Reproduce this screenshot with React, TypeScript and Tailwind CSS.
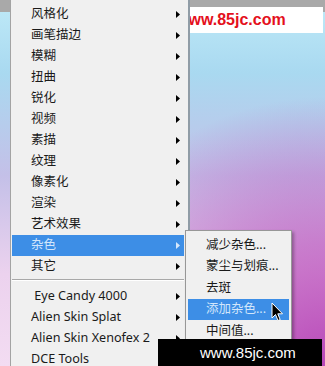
import React from "react";

const mainItems = [
  "风格化",
  "画笔描边",
  "模糊",
  "扭曲",
  "锐化",
  "视频",
  "素描",
  "纹理",
  "像素化",
  "渲染",
  "艺术效果",
  "杂色",
  "其它",
];

const pluginItems = ["\u00a0Eye Candy 4000", "Alien Skin Splat", "Alien Skin Xenofex 2", "DCE Tools"];

const subItems = ["减少杂色...", "蒙尘与划痕...", "去斑", "添加杂色...", "中间值..."];

function Arrow({ light }: { light?: boolean }) {
  return (
    <svg width="4" height="7" viewBox="0 0 4 7" className="shrink-0">
      <path d="M0 0 L4 3.5 L0 7 Z" fill={light ? "#d6e8fb" : "#000000"} />
    </svg>
  );
}

function MenuRow({ label, active, latin }: { label: string; active?: boolean; latin?: boolean }) {
  return (
    <div
      className={
        active
          ? "flex h-[21px] items-center justify-between pl-[19px] pr-[4px] bg-[#3d8ee6] text-[#d2e6fb]"
          : "flex h-[21px] items-center justify-between pl-[19px] pr-[4px] text-[#1a1a1a]"
      }
    >
      <span className={latin ? "whitespace-nowrap leading-none text-[12.6px]" : "whitespace-nowrap leading-none text-[12.5px]"}>
        {label}
      </span>
      <Arrow light={active} />
    </div>
  );
}

export default function App() {
  return (
    <div
      className="relative w-[325px] h-[366px] overflow-hidden bg-[radial-gradient(circle_at_100%_100%,#b848b8_0%,rgba(184,72,184,0.6)_25%,rgba(184,72,184,0)_55%),linear-gradient(to_bottom,#bfeaf8_0%,#a9d9f0_20%,#c4c0e8_48%,#ecd2ee_75%,#f3dcf2_100%)]"
      style={{ fontFamily: '"Noto Sans", "Noto Sans CJK SC", sans-serif' }}
    >
      {/* top gray strip */}
      <div className="h-[12px] w-full bg-[#a9a9a9]" />

      {/* top watermark */}
      <div className="absolute left-[135px] top-[7px] w-[188px] h-[26px] bg-white flex items-center pl-[41px]">
        <span
          className="text-[16px] font-bold text-[#e4101c] leading-none"
          style={{ fontFamily: '"Liberation Sans", Arial, sans-serif' }}
        >
          www.85jc.com
        </span>
      </div>

      {/* main menu */}
      <div className="absolute left-[10px] top-0 w-[180px] h-[366px] bg-[#f0f0f0] border-l border-[#a3a3a3] border-r-2 border-r-[#909ca6] pt-[3.5px] pl-[1px] pr-[4px]">
        {mainItems.map((m) => (
          <MenuRow key={m} label={m} active={m === "杂色"} />
        ))}
        <div className="mt-[2px] mb-[5.5px] h-[2px] border-t border-[#a8a8a8] bg-white" />
        {pluginItems.map((m) => (
          <MenuRow key={m} label={m} latin />
        ))}
      </div>

      {/* submenu */}
      <div className="absolute left-[185px] top-[230px] w-[107px] h-[110px] bg-[#f0f0f0] border border-[#979797] shadow-[2px_2px_3px_rgba(0,0,0,0.3)] pt-[3px] px-[2px] text-[12.5px]">
        {subItems.map((s) => (
          <div
            key={s}
            className={
              s === "添加杂色..."
                ? "flex h-[21.5px] items-center pl-[18px] bg-[#3d8ee6] text-[#d2e6fb]"
                : "flex h-[21.5px] items-center pl-[18px] text-[#1a1a1a]"
            }
          >
            <span className="whitespace-nowrap leading-none">{s}</span>
          </div>
        ))}
      </div>

      {/* cursor */}
      <svg className="absolute left-[271px] top-[302px]" width="13" height="21" viewBox="0 0 13 21">
        <path
          d="M1 1 L1 16 L4.5 12.5 L7 18.5 L9.2 17.6 L6.8 11.8 L11.5 11.8 Z"
          fill="#000"
          stroke="#fff"
          strokeWidth="1"
          strokeLinejoin="round"
        />
      </svg>

      {/* bottom watermark */}
      <div className="absolute left-[158px] top-[339px] w-[164px] h-[27px] bg-black flex items-center pl-[42px]">
        <span
          className="text-[15px] text-white leading-none"
          style={{ fontFamily: '"Liberation Sans", Arial, sans-serif' }}
        >
          www.85jc.com
        </span>
      </div>
    </div>
  );
}
